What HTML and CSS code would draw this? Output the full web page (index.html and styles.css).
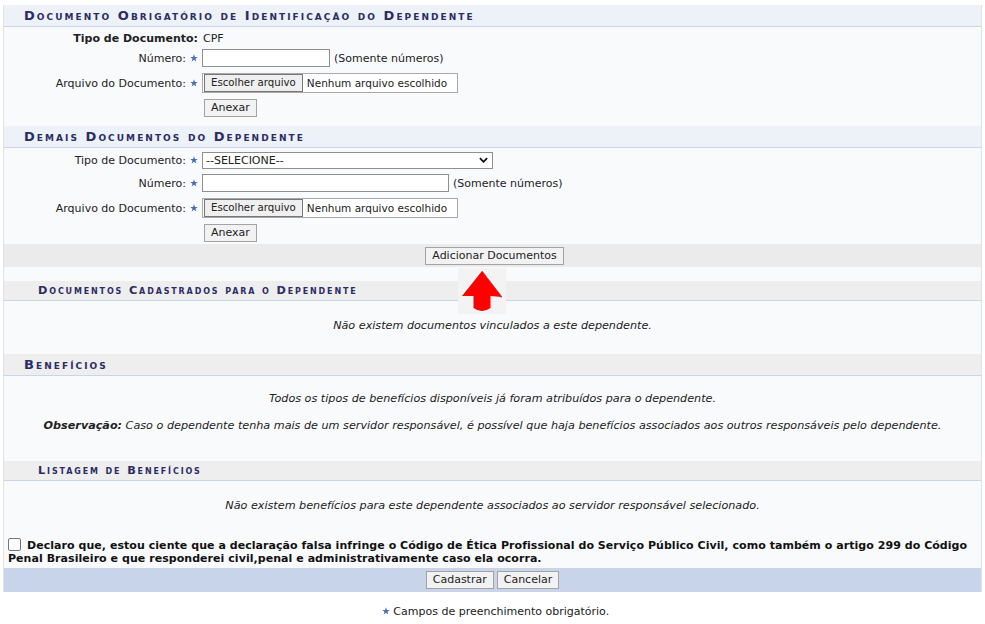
FILE: index.html
```html
<!DOCTYPE html>
<html lang="pt-BR">
<head>
<meta charset="utf-8">
<title>Dependente</title>
<link rel="stylesheet" href="styles.css">
</head>
<body>
<div class="panel">
  <div class="caption">Documento Obrigatório de Identificação do Dependente</div>
  <div class="sec sec1">
    <div class="row r1"><div class="lbl lbl-wide bold">Tipo de Documento:</div><div class="fld">CPF</div></div>
    <div class="row r2"><div class="lbl">Número:</div><div class="req"><svg viewBox="0 0 10 10"><path d="M5 0.3 6.2 3.6 9.7 3.7 6.9 5.8 7.9 9.3 5 7.2 2.1 9.3 3.1 5.8 0.3 3.7 3.8 3.6Z"/></svg></div><div class="fld"><span class="input w128"></span><span class="hint">(Somente números)</span></div></div>
    <div class="row r3"><div class="lbl">Arquivo do Documento:</div><div class="req"><svg viewBox="0 0 10 10"><path d="M5 0.3 6.2 3.6 9.7 3.7 6.9 5.8 7.9 9.3 5 7.2 2.1 9.3 3.1 5.8 0.3 3.7 3.8 3.6Z"/></svg></div><div class="fld"><span class="file"><span class="filebtn">Escolher arquivo</span><span class="filetxt">Nenhum arquivo escolhido</span></span></div></div>
    <div class="row r4"><div class="lbl"></div><div class="req"></div><div class="fld"><span class="btn">Anexar</span></div></div>
  </div>
  <div class="caption">Demais Documentos do Dependente</div>
  <div class="sec sec2">
    <div class="row r1"><div class="lbl">Tipo de Documento:</div><div class="req"><svg viewBox="0 0 10 10"><path d="M5 0.3 6.2 3.6 9.7 3.7 6.9 5.8 7.9 9.3 5 7.2 2.1 9.3 3.1 5.8 0.3 3.7 3.8 3.6Z"/></svg></div><div class="fld"><span class="select"><span>--SELECIONE--</span><svg class="chev" viewBox="0 0 10 6"><path d="M1 1 5 5 9 1"/></svg></span></div></div>
    <div class="row r2"><div class="lbl">Número:</div><div class="req"><svg viewBox="0 0 10 10"><path d="M5 0.3 6.2 3.6 9.7 3.7 6.9 5.8 7.9 9.3 5 7.2 2.1 9.3 3.1 5.8 0.3 3.7 3.8 3.6Z"/></svg></div><div class="fld"><span class="input w247"></span><span class="hint">(Somente números)</span></div></div>
    <div class="row r3"><div class="lbl">Arquivo do Documento:</div><div class="req"><svg viewBox="0 0 10 10"><path d="M5 0.3 6.2 3.6 9.7 3.7 6.9 5.8 7.9 9.3 5 7.2 2.1 9.3 3.1 5.8 0.3 3.7 3.8 3.6Z"/></svg></div><div class="fld"><span class="file"><span class="filebtn">Escolher arquivo</span><span class="filetxt">Nenhum arquivo escolhido</span></span></div></div>
    <div class="row r4"><div class="lbl"></div><div class="req"></div><div class="fld"><span class="btn">Anexar</span></div></div>
  </div>
  <div class="addbar"><span class="btn">Adicionar Documentos</span></div>
  <div class="gap"></div>
  <div class="subcap">Documentos Cadastrados para o Dependente</div>
  <div class="msg msg-docs"><em>Não existem documentos vinculados a este dependente.</em></div>
  <div class="caption gray">Benefícios</div>
  <div class="msg msg-ben">
    <p class="line"><em>Todos os tipos de benefícios disponíveis já foram atribuídos para o dependente.</em></p>
    <p class="line obs"><em><b>Observação:</b> Caso o dependente tenha mais de um servidor responsável, é possível que haja benefícios associados aos outros responsáveis pelo dependente.</em></p>
  </div>
  <div class="subcap">Listagem de Benefícios</div>
  <div class="msg msg-list"><em>Não existem benefícios para este dependente associados ao servidor responsável selecionado.</em></div>
  <div class="decl"><span class="check"></span><b>Declaro que, estou ciente que a declaração falsa infringe o Código de Ética Profissional do Serviço Público Civil, como também o artigo 299 do Código Penal Brasileiro e que responderei civil,penal e administrativamente caso ela ocorra.</b></div>
  <div class="footer"><span class="btn">Cadastrar</span><span class="btn">Cancelar</span></div>
  <div class="arrow"><svg viewBox="0 0 48 46"><rect width="48" height="46" fill="#f3f3f3"/><path d="M24 3 L44 29 L32.5 28 L32.5 40 Q24 46 15.5 40 L15.5 28 L4 28 Z" fill="#ff0000"/><path d="M24 3 L44 29 L41 28.6" fill="none" stroke="#8a4a4a" stroke-width="0.8"/></svg></div>
</div>
<div class="legend"><svg class="lstar" viewBox="0 0 10 10"><path d="M5 0.3 6.2 3.6 9.7 3.7 6.9 5.8 7.9 9.3 5 7.2 2.1 9.3 3.1 5.8 0.3 3.7 3.8 3.6Z"/></svg> Campos de preenchimento obrigatório.</div>
</body>
</html>
```

FILE: styles.css
```css
html, body { margin: 0; padding: 0; background: #ffffff; }
body {
  font-family: "DejaVu Sans", Verdana, sans-serif;
  font-size: 11px;
  color: #222;
}
.panel {
  position: relative;
  margin: 5px 0 0 3px;
  width: 977px;
  border-left: 1px solid #dfe2e8;
  border-right: 1px solid #dfe2e8;
  background: #f9fafc;
}
.caption {
  height: 21px;
  line-height: 21px;
  border-bottom: 1px solid #c8d5ec;
  background: #edf1f8;
  padding-left: 20px;
  font-weight: bold;
  font-variant: small-caps;
  font-size: 13px;
  letter-spacing: 2.05px;
  color: #2c2c64;
}
.caption.gray { background: #eeeeee; }
.subcap {
  height: 19px;
  line-height: 20px;
  border-bottom: 1px solid #c8d5ec;
  background: #eeeeee;
  padding-left: 34px;
  font-weight: bold;
  font-variant: small-caps;
  font-size: 11.3px;
  letter-spacing: 1.85px;
  color: #2c2c64;
}
.sec1 { padding: 0 0 9px; }
.sec2 { padding: 1px 0 2px; }
.row { display: flex; align-items: center; }
.r1 { height: 22px; }
.r2 { height: 18px; margin-top: 3px; }
.r3 { height: 26px; margin-top: 3px; }
.r4 { height: 18px; margin-top: 3px; }
.sec1 .r2 { margin-top: 0; }
.lbl { width: 182px; text-align: right; flex: none; }
.lbl-wide { width: 194px; padding-right: 5px; }
.bold { font-weight: bold; }
.req { width: 16px; flex: none; display: flex; justify-content: center; }
.req svg, .lstar { width: 8px; height: 8px; fill: #4a6fb8; }
.fld { display: flex; align-items: center; }
.input {
  display: inline-block;
  height: 16px;
  border: 1px solid #8f8f8f;
  background: #fff;
}
.w128 { width: 126px; }
.w247 { width: 245px; }
.hint { margin-left: 4px; }
.file {
  display: inline-flex;
  align-items: center;
  width: 254px;
  height: 18px;
  border: 1px solid #a9a9a9;
  background: #fff;
  white-space: nowrap;
  overflow: hidden;
}
.filebtn {
  height: 16px;
  line-height: 16px;
  padding: 0 6px;
  font-size: 10.2px;
  background: #efefef;
  border: 1px solid #767676;
  margin-left: 1px;
}
.filetxt { margin-left: 4px; font-size: 10.5px; }
.btn {
  display: inline-block;
  height: 16px;
  line-height: 16px;
  padding: 0 6px;
  border: 1px solid #a3a3a3;
  background: #f2f2f2;
  color: #222;
  margin-left: 2px;
}
.select {
  display: inline-flex;
  align-items: center;
  justify-content: space-between;
  width: 282px;
  height: 15px;
  padding: 0 4px 0 3px;
  border: 1px solid #8f8f8f;
  background: #fff;
}
.chev { width: 9px; height: 6px; fill: none; stroke: #111; stroke-width: 2; }
.addbar {
  margin-top: 0;
  height: 23px;
  background: #ebebeb;
  display: flex;
  align-items: center;
  justify-content: center;
}
.addbar .btn { margin-left: 4px; }
.gap { height: 14px; }
.msg { text-align: center; line-height: 14px; font-size: 11.2px; }
.msg-docs { padding: 18px 0 21px; }
.msg-ben { padding: 16px 0 28px; }
.msg-ben .line { margin: 0; }
.msg-ben .obs { margin-top: 13px; }
.msg-list { padding: 18px 0 25px; }
.decl {
  padding: 0 12px 3px 4px;
  line-height: 13px;
  font-size: 11px;
  letter-spacing: 0.05px;
  color: #111;
}
.check {
  display: inline-block;
  width: 11px;
  height: 11px;
  border: 1px solid #767676;
  border-radius: 2px;
  background: #fff;
  vertical-align: -2px;
  margin: 0 6px 0 0;
}
.footer {
  height: 24px;
  background: #c8d4ea;
  display: flex;
  align-items: center;
  justify-content: center;
  gap: 3px;
}
.footer .btn { margin: 0; }
.arrow {
  position: absolute;
  left: 454px;
  top: 263px;
  width: 48px;
  height: 46px;
}
.arrow svg { width: 48px; height: 46px; display: block; }
.legend {
  text-align: center;
  margin-top: 13px;
  line-height: 14px;
  padding-left: 6px;
}
.lstar { vertical-align: 0; }
```
